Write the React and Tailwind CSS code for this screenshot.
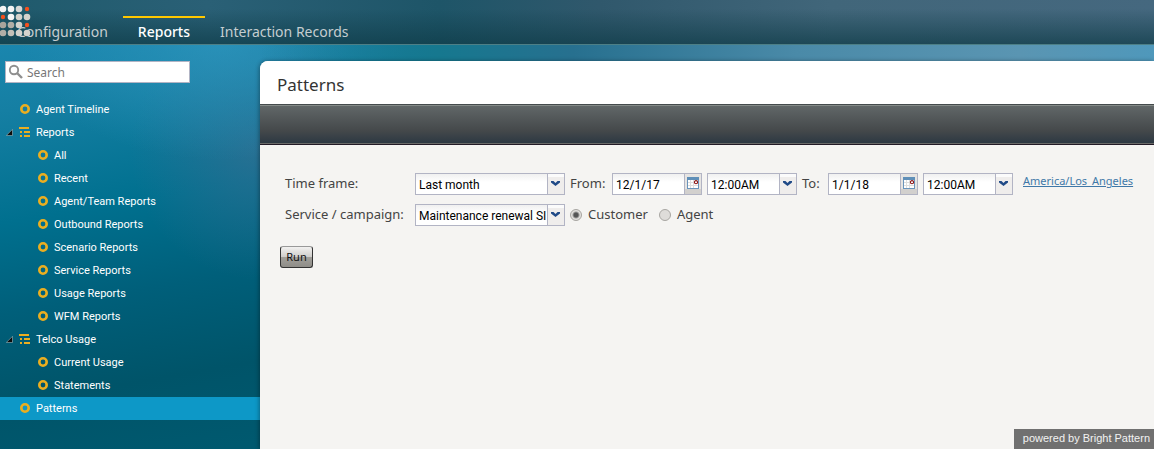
import React from "react";

const TREE = [
  { label: "Agent Timeline" },
  {
    label: "Reports",
    children: [
      "All",
      "Recent",
      "Agent/Team Reports",
      "Outbound Reports",
      "Scenario Reports",
      "Service Reports",
      "Usage Reports",
      "WFM Reports",
    ],
  },
  { label: "Telco Usage", children: ["Current Usage", "Statements"] },
  { label: "Patterns", active: true },
];

const W = "#f4f4f4";
const G = "#d4d2cc";
const D = "#b2aea6";
const R = "#f4511e";
const LOGO = [
  [W, W, "#d8d8d6", R],
  [R, W, G, G],
  ["#a8a49c", D, G, R],
  [D, "#c4c0b8", G, G],
];

function Logo() {
  return (
    <svg className="absolute left-0 top-0 h-10 w-8" viewBox="0 0 32 40" aria-hidden="true">
      {LOGO.map((row, y) =>
        row.map((fill, x) => (
          <circle key={x + "-" + y} cx={3 + x * 8} cy={9 + y * 8} r={fill === R ? 2.2 : 3.3} fill={fill} />
        ))
      )}
    </svg>
  );
}

function Tab({ label, active }) {
  return (
    <a
      href="#"
      aria-current={active ? "page" : undefined}
      className={
        "mt-4 flex h-7 items-center border-t-2 px-[15px] pt-px text-[14px] whitespace-nowrap " +
        (active ? "border-[#ffc800] font-medium text-white" : "border-transparent text-[#c5cdd0]")
      }
    >
      {label}
    </a>
  );
}

function RingIcon() {
  return (
    <svg className="size-[11px] shrink-0" viewBox="0 0 11 11" aria-hidden="true">
      <circle cx="5" cy="5" r="3.7" fill="none" stroke="#eaae20" strokeWidth="2.6" />
    </svg>
  );
}

function TreeIcon() {
  return (
    <svg className="size-[11px] shrink-0" viewBox="0 0 11 11" shapeRendering="crispEdges" aria-hidden="true">
      <g fill="#eaae20">
        <rect x="0" y="0" width="10" height="2" />
        <rect x="1" y="4" width="2" height="2" />
        <rect x="5" y="4" width="6" height="2" />
        <rect x="1" y="8" width="2" height="2" />
        <rect x="5" y="8" width="6" height="2" />
      </g>
    </svg>
  );
}

function Leaf({ label, nested, active }) {
  return (
    <a
      href="#"
      aria-current={active ? "page" : undefined}
      className={
        "flex h-[23px] items-center gap-[5px] " +
        (nested ? "pl-[38px] " : "pl-5 ") +
        (active ? "bg-[#0d98c7]" : "")
      }
    >
      <RingIcon />
      <span className="pt-[2px]">{label}</span>
    </a>
  );
}

function Branch({ label, items }) {
  return (
    <li>
      <button type="button" aria-expanded="true" className="flex h-[23px] w-full items-center pl-[6px] text-left">
        <svg className="h-[7px] w-[7px]" viewBox="0 0 7 7" aria-hidden="true">
          <path d="M6.500 0.300V6.500H0.300z" fill="#0c0c0c" stroke="#9ab8c0" strokeWidth="0.6" />
        </svg>
        <span className="ml-[6px] mr-[6px] flex">
          <TreeIcon />
        </span>
        <span className="pt-[2px]">{label}</span>
      </button>
      <ul>
        {items.map((item) => (
          <li key={item}>
            <Leaf label={item} nested />
          </li>
        ))}
      </ul>
    </li>
  );
}

const BOX =
  "h-[22px] w-full appearance-none rounded-none border border-[#b2b4c4] bg-linear-to-b from-[#f0f0f0] to-white to-40% pl-[3px] pr-[17px] pt-px font-[Roboto,sans-serif] text-[12px] text-black outline-none";

function Combo({ id, label, value, className }) {
  return (
    <div className={"relative flex " + className}>
      <select id={id} aria-label={label} className={BOX}>
        <option>{value}</option>
      </select>
      <svg className="pointer-events-none absolute inset-y-0 right-0 h-[22px] w-[18px]" viewBox="0 0 18 22" aria-hidden="true">
        <rect x="0.5" y="0.5" width="17" height="21" fill="#efedec" stroke="#b2b4c4" />
        <rect x="1" y="1" width="16" height="3" fill="#fbfbfb" />
        <path d="M4 8h2.500l2 2 2-2h2.500v1.500L8.500 13 4 9.500z" fill="#204a87" />
      </svg>
    </div>
  );
}

function DateField({ id, value }) {
  return (
    <div className="relative flex w-[90px]">
      <input id={id} type="text" defaultValue={value} className={BOX} />
      <button type="button" aria-label="Pick a date" className="absolute inset-y-0 right-0 h-[22px] w-[18px]">
        <svg className="block h-[22px] w-[18px]" viewBox="0 0 18 22" aria-hidden="true">
          <rect x="0.5" y="0.5" width="17" height="21" fill="#e6e4e2" stroke="#b2b4c4" />
          <rect x="1" y="16" width="16" height="5" fill="#d2d0ce" />
          <rect x="3.5" y="4.5" width="11" height="11" fill="#fff" stroke="#6a94bc" />
          <rect x="3" y="4" width="12" height="3" fill="#5f8fb8" />
          <path d="M6.5 7v8M9.5 7v8M4 9.5h10M4 12.5h10" stroke="#dedede" />
          <circle cx="12" cy="9.2" r="1.6" fill="#fff" stroke="#8c1414" strokeWidth="1.1" />
        </svg>
      </button>
    </div>
  );
}

function Radio({ label, checked }) {
  return (
    <label className="flex items-center gap-[6px]">
      <input
        type="radio"
        name="party"
        defaultChecked={checked}
        className="size-3 appearance-none rounded-full border border-[#a8a6a2] bg-[#dedcd9] checked:bg-[radial-gradient(circle,#555_0_2px,#e2e0dd_4px)]"
      />
      {label}
    </label>
  );
}

export default function App() {
  return (
    <div className="flex min-h-screen flex-col bg-[radial-gradient(ellipse_200px_120px_at_220px_40px,#2d95bdcc,transparent),radial-gradient(ellipse_130px_130px_at_260px_150px,#3f6e9399,transparent),linear-gradient(170deg,#1a86ae_45px,#157fa3_110px,#00708f_220px,#005f7a_310px,#005469_400px,#00596f_480px)] font-['Noto_Sans',sans-serif]">
      <header className="relative border-b border-[#4d7f86] bg-[linear-gradient(to_bottom,transparent_20%,#0e3b47b0),linear-gradient(to_right,#1f5a6c,#2a6076_18%,#1e5568_38%,#30586c_52%,#41667a_72%,#45687f)]">
        <nav className="flex pl-[2px]">
          <Tab label="Configuration" />
          <Tab label="Reports" active />
          <Tab label="Interaction Records" />
        </nav>
        <Logo />
      </header>

      <div className="flex flex-1">
        <aside className="w-[260px] shrink-0 pt-4 font-[Roboto,sans-serif] text-[11px] text-white">
          <div className="relative mx-[5px] w-[185px]">
            <input
              type="search"
              aria-label="Search"
              placeholder="Search"
              className="block h-[22px] w-full border border-[#b2b4c4] bg-white pl-[21px] font-['Noto_Sans',sans-serif] text-[12px] text-black outline-none placeholder:text-[#777]"
            />
            <svg className="pointer-events-none absolute left-[3px] top-[3px] size-4" viewBox="0 0 16 16" fill="none" aria-hidden="true">
              <circle cx="6" cy="6" r="4.2" stroke="#8f8f8f" strokeWidth="1.9" />
              <path d="M9 9l5 5" stroke="#8f8f8f" strokeWidth="2.4" />
            </svg>
          </div>
          <ul className="mt-[15px]">
            {TREE.map((node) =>
              node.children ? (
                <Branch key={node.label} label={node.label} items={node.children} />
              ) : (
                <li key={node.label}>
                  <Leaf label={node.label} active={node.active} />
                </li>
              )
            )}
          </ul>
        </aside>

        <div className="flex min-w-0 flex-1 flex-col bg-[linear-gradient(to_right,transparent,#16788f_20%,#27708f_35%,#4a8aa8_60%,#5a95b2_85%,#4f98bb)] bg-no-repeat bg-[length:100%_40px] pt-4">
          <main className="flex flex-1 flex-col rounded-tl-lg bg-[#f5f4f2] shadow-[-1px_0_4px_#0005]">
            <h1 className="flex h-[43px] items-center rounded-tl-lg bg-white pl-[17px] pt-1 text-[17px] text-[#333]">
              Patterns
            </h1>
            <div className="h-[41px] border-y border-t-[#444a4c] border-b-[#221a26] bg-linear-to-b from-[#626869] via-[#45494b] via-65% to-[#2b3742] shadow-[inset_0_1px_0_#858b88,inset_0_-1px_0_#6a6a68]" />

            <form className="flex flex-col gap-[9px] pl-[25px] pt-7 text-[13px] text-[#444]" onSubmit={(e) => e.preventDefault()}>
              <div className="flex items-center gap-[5px] whitespace-nowrap">
                <label htmlFor="frame" className="w-[125px]">Time frame:</label>
                <Combo id="frame" value="Last month" className="w-[150px]" />
                <label htmlFor="from" className="w-[37px]">From:</label>
                <DateField id="from" value="12/1/17" />
                <Combo label="From time" value="12:00AM" className="w-[90px]" />
                <label htmlFor="to" className="w-[21px]">To:</label>
                <DateField id="to" value="1/1/18" />
                <Combo label="To time" value="12:00AM" className="w-[90px]" />
                <a href="#" className="self-start pl-[5px] text-[11px] leading-4 text-[#3f78a8] underline">America/Los_Angeles</a>
              </div>
              <div className="flex items-center gap-[5px] whitespace-nowrap">
                <label htmlFor="service" className="w-[125px]">Service / campaign:</label>
                <Combo id="service" value="Maintenance renewal SI" className="w-[150px]" />
                <div className="flex gap-[11px]">
                  <Radio label="Customer" checked />
                  <Radio label="Agent" />
                </div>
              </div>
              <button
                type="submit"
                className="-ml-[5px] mt-[11px] h-[22px] w-[33px] rounded-[3px] border border-[#333] border-t-[#999] bg-[linear-gradient(to_bottom,#f2f1f0,#cfcdca_50%,#a19f9a_51%,#8f8d88)] text-[11px] text-[#111]"
              >
                Run
              </button>
            </form>
          </main>
        </div>
      </div>

      <footer className="fixed bottom-0 right-0 h-5 bg-[#707070] pl-[9px] pr-1 font-['Liberation_Sans',sans-serif] text-[11px] leading-[19px] text-[#f2f2f2]">
        powered by Bright Pattern
      </footer>
    </div>
  );
}
